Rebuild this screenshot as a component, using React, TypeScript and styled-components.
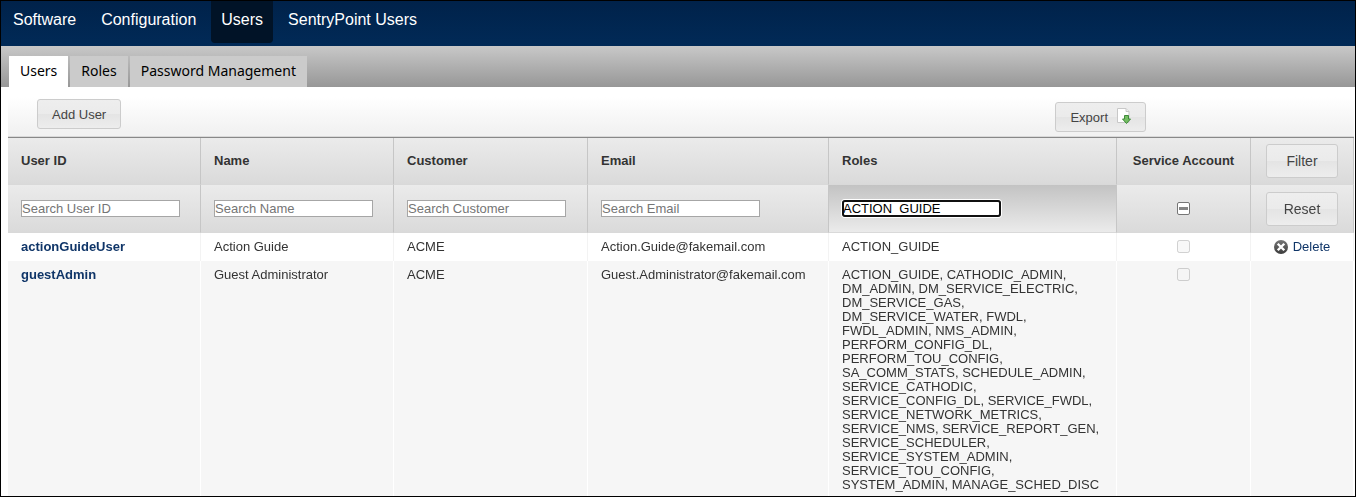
import React from "react";
import styled, { createGlobalStyle, css } from "styled-components";

const GlobalStyle = createGlobalStyle`
  *, *::before, *::after { box-sizing: border-box; }
  body {
    margin: 0;
    background: #fff;
    color: #333;
    font-family: "Liberation Sans", Arial, sans-serif;
    font-size: 13px;
    line-height: 14px;
  }
`;

const Frame = styled.div`
  display: flex;
  flex-direction: column;
  height: 100vh;
  overflow: hidden;
  border: 1px solid #000;
`;

const TopNav = styled.nav`
  display: flex;
  flex: none;
  align-items: flex-start;
  gap: 5px;
  height: 45px;
  padding-left: 2px;
  background: linear-gradient(#00224a, #012a57);
`;

const NavLink = styled.a<{ $active?: boolean }>`
  height: 42px;
  padding: 0 10px;
  border-radius: 0 0 4px 4px;
  background: ${(p) => (p.$active ? "#011327" : "transparent")};
  color: #fff;
  font-size: 16px;
  line-height: 38px;
  text-decoration: none;
`;

const TabStrip = styled.nav`
  display: flex;
  flex: none;
  align-items: flex-end;
  gap: 2px;
  height: 41px;
  padding-left: 8px;
  background: linear-gradient(#c8c8c8, #979797);
`;

const Tab = styled.a<{ $active?: boolean }>`
  height: 31px;
  padding: 0 11px;
  background: ${(p) => (p.$active ? "#fff" : "#cbcbcb")};
  color: #000;
  font-family: "Noto Sans", "Open Sans", sans-serif;
  font-size: 14px;
  line-height: 30px;
  text-decoration: none;
`;

const Main = styled.main`
  flex: 1;
  min-height: 0;
  padding: 0 1px 0 7px;
  overflow: hidden;
`;

const Toolbar = styled.div`
  display: flex;
  align-items: flex-start;
  justify-content: space-between;
  height: 50px;
  padding: 12px 208px 0 29px;
  border-bottom: 1px solid #d9d9d9;
  background: linear-gradient(#fff, #fff 20%, #f2f2f2 90%);
`;

const Button = styled.button<{ $size?: "large" }>`
  display: inline-flex;
  align-items: center;
  justify-content: center;
  gap: 7px;
  height: 30px;
  padding: 0 14px;
  border: 1px solid #ccc;
  border-radius: 3px;
  background: linear-gradient(#eee, #ebebeb 50%, #e4e4e4 50%, #ededed);
  color: #444;
  font-family: inherit;
  font-size: 13px;
  ${(p) =>
    p.$size === "large" &&
    css`
      width: 72px;
      height: 34px;
      font-size: 14px;
    `}
`;

const ExportSlot = styled.div`
  padding-top: 3px;
  svg { margin-bottom: 4px; }
`;

const UserTable = styled.table`
  width: 100%;
  table-layout: fixed;
  border-collapse: separate;
  border-spacing: 0;
  border-top: 1px solid #888;
`;

const HeadCell = styled.th<{ $center?: boolean; $focused?: boolean; $row: "title" | "filter" }>`
  height: ${(p) => (p.$row === "title" ? 47 : 48)}px;
  padding: ${(p) => (p.$center ? "0 12px" : "0 14px 0 13px")};
  border-right: 1px solid #c6c6c6;
  border-bottom: 1px solid #d9d9d9;
  background: ${(p) =>
    p.$focused
      ? "linear-gradient(#c3c3c3, #ebebeb)"
      : "linear-gradient(#ebebeb, #dadada)"};
  font-weight: bold;
  text-align: ${(p) => (p.$center ? "center" : "left")};
  vertical-align: middle;
`;

const SearchInput = styled.input`
  display: block;
  width: 159px;
  height: 17px;
  margin: 0;
  padding: 0;
  border: 1px solid #a6a6a6;
  background: #fff;
  color: #000;
  font-family: inherit;
  font-size: 13px;
  &::placeholder { color: #757575; }
  &:focus {
    border-radius: 3px;
    outline: 2px solid #101010;
    outline-offset: -2px;
    box-shadow: 0 0 0 1px #fff;
  }
`;

const BodyRow = styled.tr<{ $striped?: boolean }>`
  background: ${(p) => (p.$striped ? "#f6f6f6" : "#fff")};
`;

const BodyCell = styled.td<{ $center?: boolean; $striped?: boolean }>`
  padding: ${(p) => (p.$center ? "7px 12px" : "7px 14px 7px 13px")};
  border-right: 1px solid ${(p) => (p.$striped ? "#fff" : "#f3f3f3")};
  text-align: ${(p) => (p.$center ? "center" : "left")};
  vertical-align: top;
`;

const UserLink = styled.a`
  color: #0f3568;
  font-weight: bold;
  text-decoration: none;
`;

const DeleteButton = styled.button`
  display: flex;
  align-items: center;
  gap: 5px;
  height: 14px;
  margin: 0 auto;
  padding: 0;
  border: 0;
  background: none;
  color: #0f3568;
  font-family: inherit;
  font-size: 13px;
  line-height: 14px;
`;

const Check = styled.input`
  display: block;
  width: 13px;
  height: 13px;
  margin: 0 auto;
`;

const MixedCheck = styled(Check)`
  appearance: none;
  border: 1px solid #767676;
  border-radius: 2px;
  background: #fff;
  &:indeterminate {
    background: linear-gradient(#858585, #858585) center / 9px 3px no-repeat #fff;
  }
  &:checked { background: #767676; }
`;

const ExportIcon = () => (
  <svg width="16" height="17" viewBox="0 0 16 17" aria-hidden="true">
    <path d="M2.500 1.500h8.500l3 3v11H2.500z" fill="#fff" stroke="#c8c8c8" />
    <path d="M11 1.500v3h3" fill="#eee" stroke="#c8c8c8" />
    <path d="M9.500 8.500h4v3.500h2l-4 4.500-4-4.500h2z" fill="#74bd62" stroke="#3f8a3a" strokeLinejoin="round" />
  </svg>
);

const DeleteIcon = () => (
  <svg width="14" height="14" viewBox="0 0 15 15" aria-hidden="true">
    <defs>
      <linearGradient id="delete-fill" x1="0" y1="0" x2="0" y2="1">
        <stop offset="0" stopColor="#777" />
        <stop offset="1" stopColor="#3c3c3c" />
      </linearGradient>
    </defs>
    <circle cx="7.500" cy="7.500" r="7.500" fill="url(#delete-fill)" />
    <path d="M4 4l7 7M11 4l-7 7" stroke="#fff" strokeWidth="2.600" />
  </svg>
);

const columns = [
  { label: "User ID", width: 193 },
  { label: "Name", width: 193 },
  { label: "Customer", width: 194 },
  { label: "Email", width: 241 },
  { label: "Roles", width: 288, value: "ACTION_GUIDE" },
];

const users = [
  {
    id: "actionGuideUser",
    name: "Action Guide",
    customer: "ACME",
    email: "Action.Guide@fakemail.com",
    roles: ["ACTION_GUIDE"],
    removable: true,
  },
  {
    id: "guestAdmin",
    name: "Guest Administrator",
    customer: "ACME",
    email: "Guest.Administrator@fakemail.com",
    roles: [
      "ACTION_GUIDE", "CATHODIC_ADMIN", "DM_ADMIN", "DM_SERVICE_ELECTRIC",
      "DM_SERVICE_GAS", "DM_SERVICE_WATER", "FWDL", "FWDL_ADMIN", "NMS_ADMIN",
      "PERFORM_CONFIG_DL", "PERFORM_TOU_CONFIG", "SA_COMM_STATS",
      "SCHEDULE_ADMIN", "SERVICE_CATHODIC", "SERVICE_CONFIG_DL",
      "SERVICE_FWDL", "SERVICE_NETWORK_METRICS", "SERVICE_NMS",
      "SERVICE_REPORT_GEN", "SERVICE_SCHEDULER", "SERVICE_SYSTEM_ADMIN",
      "SERVICE_TOU_CONFIG", "SYSTEM_ADMIN", "MANAGE_SCHED_DISC",
    ],
    removable: false,
  },
];

export default function App() {
  const setMixed = (el: HTMLInputElement | null) => {
    if (el) el.indeterminate = true;
  };
  return (
    <Frame>
      <GlobalStyle />
      <TopNav>
        <NavLink href="#software">Software</NavLink>
        <NavLink href="#configuration">Configuration</NavLink>
        <NavLink href="#users" $active>Users</NavLink>
        <NavLink href="#sentrypoint">SentryPoint Users</NavLink>
      </TopNav>
      <TabStrip>
        <Tab href="#users-tab" $active>Users</Tab>
        <Tab href="#roles-tab">Roles</Tab>
        <Tab href="#passwords-tab">Password Management</Tab>
      </TabStrip>
      <Main>
        <Toolbar>
          <Button type="button">Add User</Button>
          <ExportSlot>
            <Button type="button">Export <ExportIcon /></Button>
          </ExportSlot>
        </Toolbar>
        <UserTable>
          <colgroup>
            {columns.map((c) => <col key={c.label} width={c.width} />)}
            <col width={134} />
            <col width={103} />
          </colgroup>
          <thead>
            <tr>
              {columns.map((c) => (
                <HeadCell key={c.label} scope="col" $row="title">{c.label}</HeadCell>
              ))}
              <HeadCell scope="col" $row="title" $center>Service Account</HeadCell>
              <HeadCell $row="title" $center>
                <Button type="button" $size="large">Filter</Button>
              </HeadCell>
            </tr>
            <tr>
              {columns.map((c) => (
                <HeadCell key={c.label} $row="filter" $focused={!!c.value}>
                  <SearchInput
                    aria-label={`Search ${c.label}`}
                    placeholder={`Search ${c.label}`}
                    defaultValue={c.value}
                    autoFocus={!!c.value}
                  />
                </HeadCell>
              ))}
              <HeadCell $row="filter" $center>
                <MixedCheck type="checkbox" ref={setMixed} aria-label="Service Account" />
              </HeadCell>
              <HeadCell $row="filter" $center>
                <Button type="button" $size="large">Reset</Button>
              </HeadCell>
            </tr>
          </thead>
          <tbody>
            {users.map((u, i) => {
              const striped = i % 2 === 1;
              return (
                <BodyRow key={u.id} $striped={striped}>
                  <BodyCell $striped={striped}><UserLink href={`#${u.id}`}>{u.id}</UserLink></BodyCell>
                  <BodyCell $striped={striped}>{u.name}</BodyCell>
                  <BodyCell $striped={striped}>{u.customer}</BodyCell>
                  <BodyCell $striped={striped}>{u.email}</BodyCell>
                  <BodyCell $striped={striped}>{u.roles.join(", ")}</BodyCell>
                  <BodyCell $striped={striped} $center>
                    <Check type="checkbox" disabled aria-label={`${u.id} service account`} />
                  </BodyCell>
                  <BodyCell $striped={striped} $center>
                    {u.removable && (
                      <DeleteButton type="button"><DeleteIcon />Delete</DeleteButton>
                    )}
                  </BodyCell>
                </BodyRow>
              );
            })}
          </tbody>
        </UserTable>
      </Main>
    </Frame>
  );
}
